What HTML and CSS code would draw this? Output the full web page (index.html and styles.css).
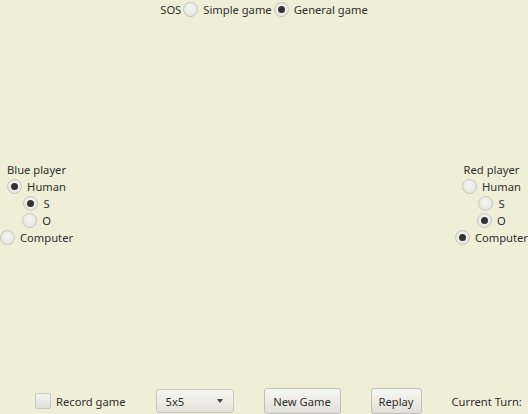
FILE: index.html
```html
<!DOCTYPE html>
<html>
<head>
<meta charset="utf-8">
<link rel="stylesheet" href="styles.css">
</head>
<body>
<div class="app">
  <div class="top">
    <span class="lbl">SOS</span>
    <label class="radio"><span class="dot"></span><span>Simple game</span></label>
    <label class="radio"><span class="dot on"></span><span>General game</span></label>
  </div>
  <div class="middle">
    <div class="player">
      <div class="lbl row">Blue player</div>
      <label class="radio row"><span class="dot on"></span><span>Human</span></label>
      <label class="radio row"><span class="dot on"></span><span>S</span></label>
      <label class="radio row"><span class="dot"></span><span>O</span></label>
      <label class="radio row"><span class="dot"></span><span>Computer</span></label>
    </div>
    <div class="player">
      <div class="lbl row">Red player</div>
      <label class="radio row"><span class="dot"></span><span>Human</span></label>
      <label class="radio row"><span class="dot"></span><span>S</span></label>
      <label class="radio row"><span class="dot on"></span><span>O</span></label>
      <label class="radio row"><span class="dot on"></span><span>Computer</span></label>
    </div>
  </div>
  <div class="bottom">
    <label class="check"><span class="box"></span><span>Record game</span></label>
    <div class="combo"><span>5x5</span><span class="arrow"></span></div>
    <div class="btn newgame">New Game</div>
    <div class="btn replay">Replay</div>
    <span class="lbl">Current Turn:</span>
  </div>
</div>
</body>
</html>
```

FILE: styles.css
```css
html, body {
  margin: 0;
  padding: 0;
}
body {
  background: #efefd8;
  font-family: "Noto Sans", "Open Sans", sans-serif;
  font-size: 11.2px;
  color: #2e2e2e;
  width: 528px;
  height: 414px;
  overflow: hidden;
}
.app {
  display: flex;
  flex-direction: column;
  width: 528px;
  height: 414px;
}
.top {
  display: flex;
  justify-content: center;
  align-items: center;
  gap: 2px;
  height: 18px;
}
.lbl {
  white-space: nowrap;
}
.radio {
  display: inline-flex;
  align-items: center;
  gap: 5px;
  white-space: nowrap;
}
.dot {
  width: 13px;
  height: 13px;
  border-radius: 50%;
  border: 1px solid #c4c4bc;
  background: radial-gradient(circle at 50% 40%, #f6f6f0 0%, #e2e2dc 100%);
  display: inline-flex;
  align-items: center;
  justify-content: center;
  flex: none;
}
.dot.on::after {
  content: "";
  width: 7px;
  height: 7px;
  border-radius: 50%;
  background: #333333;
}
.middle {
  flex: 1;
  display: flex;
  justify-content: space-between;
  align-items: center;
}
.player {
  display: flex;
  flex-direction: column;
  align-items: center;
}
.row {
  height: 17px;
  line-height: 17px;
}
.bottom {
  display: flex;
  align-items: center;
  height: 26px;
  padding-left: 35px;
  gap: 30px;
}
.check {
  display: inline-flex;
  align-items: center;
  gap: 5px;
  white-space: nowrap;
}
.box {
  width: 14px;
  height: 14px;
  border: 1px solid #c8c8c0;
  border-radius: 2px;
  background: linear-gradient(#f4f4ee, #e0e0da);
}
.combo {
  height: 22px;
  border: 1px solid #c8c8c0;
  border-radius: 3px;
  background: linear-gradient(#f6f6ee, #e2e2da);
  display: flex;
  align-items: center;
  justify-content: space-between;
  padding: 0 10px 0 9px;
  width: 57px;
}
.arrow {
  width: 0;
  height: 0;
  border-left: 3.5px solid transparent;
  border-right: 3.5px solid transparent;
  border-top: 4px solid #444;
}
.btn {
  height: 24px;
  border: 1px solid #c0c0b8;
  border-radius: 3px;
  background: linear-gradient(#f8f8f2, #e0e0d8);
  display: flex;
  align-items: center;
  justify-content: center;
  white-space: nowrap;
}
.newgame {
  width: 75px;
}
.replay {
  width: 49px;
}
```
